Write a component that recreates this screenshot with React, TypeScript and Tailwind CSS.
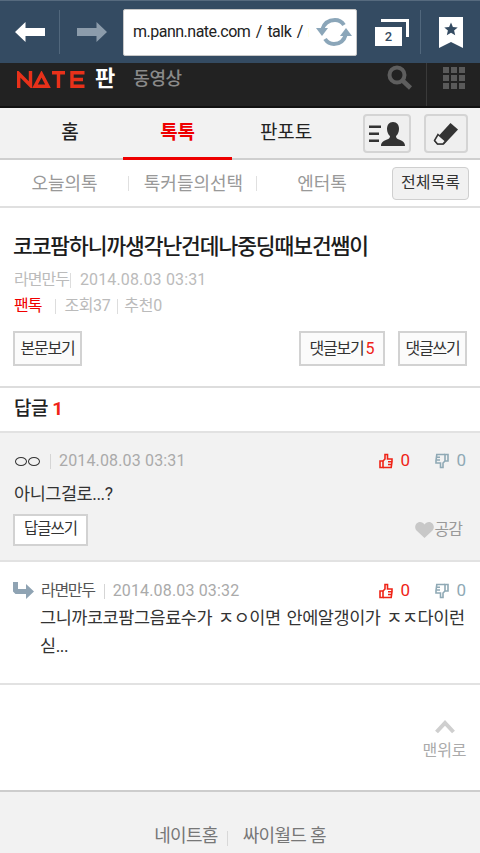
const FONT = "font-['Roboto','Noto_Sans_CJK_KR',sans-serif]";

function ThumbUp({ c }: { c: string }) {
  return (
    <svg width="14" height="16" viewBox="0 0 14 16" fill="none" stroke={c} strokeWidth="1.600">
      <path d="M1 8h3v6.500H1z" />
      <path d="M4 8l2-2V1.500h2.500V6H13v2.500l-.8 6H4" />
      <path d="M9 8.800h4M9 11.500h3.500" />
    </svg>
  );
}

function ThumbDown({ c }: { c: string }) {
  return (
    <svg width="14" height="16" viewBox="0 0 14 16" fill="none" stroke={c} strokeWidth="1.600">
      <path d="M10 1.500h3v6.500h-3z" />
      <path d="M10 8l-2 2v4.500H5.500V10H1V7.500l.8-6H10" />
      <path d="M5 4.200H1M5 7H1.300" />
    </svg>
  );
}

function Votes() {
  return (
    <div className="flex items-center">
      <div className="flex w-[56px] items-center gap-[7px] text-[17px] text-[#ef2317]">
        <ThumbUp c="#ef2317" />
        <span>0</span>
      </div>
      <div className="flex items-center gap-[7px] text-[17px] text-[#8fa9b5]">
        <ThumbDown c="#8fa9b5" />
        <span>0</span>
      </div>
    </div>
  );
}

function SmallBtn({ children, className = "" }: { children: React.ReactNode; className?: string }) {
  return (
    <div className={`flex items-center justify-center border-2 border-[#d2d2d2] text-[#333] ${className}`}>
      {children}
    </div>
  );
}

function BrowserBar() {
  return (
    <div className="flex h-[63px] items-center border-t border-t-[#566a7e] bg-[#344b62]">
      <div className="flex w-[59px] justify-center">
        <svg width="30" height="20" viewBox="0 0 30 20"><path d="M0 10 10.500 0v6H30v8H10.500v6z" fill="#fff" /></svg>
      </div>
      <div className="h-[44px] w-px bg-[#51677c]" />
      <div className="flex w-[63px] justify-center">
        <svg width="30" height="20" viewBox="0 0 30 20"><path d="M30 10 19.500 0v6H0v8h19.500v6z" fill="#8c9cab" /></svg>
      </div>
      <div className="flex h-[47px] w-[234px] items-center rounded-[2px] border border-[#c8c8c8] bg-white pl-[9px]">
        <span className="w-[176px] shrink-0 overflow-hidden whitespace-nowrap text-[16px] tracking-[-0.5px] text-[#222] [word-spacing:2px]">m.pann.nate.com / talk / m</span>
        <svg width="36" height="30" viewBox="0 0 36 30" className="ml-[7px] shrink-0" fill="none">
          <path d="M6 13C8 6 13 3 19 3c4 0 7 2 9 5" stroke="#8ba6b9" strokeWidth="4" />
          <path d="M30 17c-2 7-7 10-12 10-4 0-7-2-9-5" stroke="#8ba6b9" strokeWidth="4" />
          <path d="M0 11h12l-6 8zM24 19h12l-6-8z" fill="#8ba6b9" />
        </svg>
      </div>
      <div className="flex w-[63px] justify-center pl-[7px]">
        <div className="relative h-[27px] w-[34px]">
          <div className="absolute right-0 top-0 h-[18px] w-[28px] border-r-[3px] border-t-[3px] border-white" />
          <div className="absolute bottom-0 left-0 flex h-[19px] w-[27px] items-center justify-center bg-white text-[13px] font-medium leading-none text-[#344b62]">2</div>
        </div>
      </div>
      <div className="h-[44px] w-px bg-[#51677c]" />
      <div className="flex flex-1 justify-center">
        <svg width="24" height="31" viewBox="0 0 24 31">
          <path d="M0 0h24v31l-12-6-12 6z" fill="#fff" />
          <path d="M12 5.500l1.900 4.500 4.800.4-3.600 3.100 1.100 4.700-4.200-2.500-4.200 2.500 1.100-4.700-3.600-3.100 4.800-.4z" fill="#344b62" />
        </svg>
      </div>
    </div>
  );
}

function NateHeader() {
  return (
    <div className="flex h-[45px] items-start border-b-2 border-b-[#111] bg-[#222]">
      <div className="flex h-[24px] items-center pl-[17px] pt-[8px]">
        <svg width="68" height="17" viewBox="0 0 68 17" fill="none" stroke="#e8311a" strokeWidth="3.400">
          <path d="M1.700 17V2.500L13.500 14.500V0" />
          <path d="M18 15.300h13L24.500 3z" />
          <path d="M35 1.700h13M41.500 1.700V17" />
          <path d="M67.500 1.700H55v13.600h12.500M55 8.500h11" />
        </svg>
        <span className="ml-[10px] text-[22px] font-bold leading-none text-white">판</span>
        <span className="ml-[18px] text-[18px] font-medium leading-none tracking-[-0.4px] text-[#8a8a8a]">동영상</span>
      </div>
      <div className="ml-auto flex h-[43px]">
        <svg width="26" height="26" viewBox="0 0 26 26" fill="none" className="mt-[2px]">
          <circle cx="10" cy="10" r="7.500" stroke="#5e5e5e" strokeWidth="4" />
          <path d="M15.500 15.500 23.500 23" stroke="#5e5e5e" strokeWidth="4.500" />
        </svg>
        <div className="ml-[13px] h-[43px] w-px bg-[#3a3a3a]" />
        <div className="ml-[16px] mr-[15px] mt-[4px] grid h-[22px] w-[22px] grid-cols-3 gap-[2px]">
          {Array.from({ length: 9 }).map((_, i) => (
            <div key={i} className="bg-[#5a5a5a]" />
          ))}
        </div>
      </div>
    </div>
  );
}

function MainNav() {
  return (
    <div className="flex h-[52px] items-stretch border-b-2 border-b-[#cfcfcf] bg-[#f2f2f2]">
      <div className="flex w-[123px] items-center justify-center pl-[17px] text-[19px] font-medium text-[#222]">홈</div>
      <div className="relative flex w-[109px] items-center justify-center text-[19px] font-bold tracking-[-0.2px] text-[#ee0000]">
        톡톡
        <div className="absolute bottom-[-2px] left-0 right-0 h-[3px] bg-[#ee0000]" />
      </div>
      <div className="flex w-[108px] items-center justify-center text-[19px] tracking-[-0.1px] text-[#222]">판포토</div>
      <div className="ml-[23px] mt-[6px] flex h-[39px] w-[48px] items-center justify-center rounded-[4px] border-2 border-[#d4d4d4] bg-[#efefef]">
        <svg width="36" height="24" viewBox="0 0 36 24" fill="#333">
          <path d="M0 3.500h12V6H0zM0 10.500h10V13H0zM0 17.500h10V20H0z" />
          <path d="M24 0c4 0 6 3 6 7 0 3-1.500 6-3 7 0 2 1 3 3 3.500 3 1 6 2.500 6 6.500H12c0-4 3-5.500 6-6.500 2-.5 3-1.500 3-3.500-1.500-1-3-4-3-7 0-4 2-7 6-7z" />
        </svg>
      </div>
      <div className="ml-[13px] mt-[6px] flex h-[39px] w-[44px] items-center justify-center rounded-[4px] border-2 border-[#d4d4d4] bg-[#efefef]">
        <svg width="26" height="24" viewBox="0 0 26 24">
          <path d="M17.500 1 25 7.500 11 22.500H4L1 19z" fill="#333" />
          <path d="M5 12.500 12.500 19 10 22H4.500L1.500 18.500z" fill="#f2f2f2" stroke="#333" strokeWidth="1.500" />
        </svg>
      </div>
    </div>
  );
}

function SubNav() {
  return (
    <div className="flex h-[48px] items-center border-b-2 border-b-[#e0e0e0] bg-white text-[18px] text-[#999]">
      <div className="flex w-[128px] justify-center pl-[1px]">오늘의톡</div>
      <div className="h-[15px] w-px bg-[#e0e0e0]" />
      <div className="flex w-[127px] justify-center pl-[2px]">톡커들의선택</div>
      <div className="h-[15px] w-px bg-[#e0e0e0]" />
      <div className="flex w-[135px] justify-center pr-[5px]">엔터톡</div>
      <div className="flex h-[33px] w-[77px] items-center justify-center rounded-[4px] border border-[#cfcfcf] bg-[#f1f1f1] text-[16px] text-[#333]">전체목록</div>
    </div>
  );
}

function Article() {
  return (
    <div className="h-[180px] border-b-2 border-b-[#dddddd] bg-white pl-[13px] pr-[13px] pt-[24px]">
      <div className="h-[29px] whitespace-nowrap text-[21.500px] font-medium leading-[29px] tracking-[-1.100px] text-[#1c1c1c]">코코팜하니까생각난건데나중딩때보건쌤이</div>
      <div className="mt-[9px] flex h-[20px] items-center pl-px text-[16px] text-[#bbb]">
        <span className="tracking-[-1px]">라면만두</span>
        <span className="ml-px h-[15px] w-px bg-[#ddd]" />
        <span className="ml-[9px] tracking-[0.15px]">2014.08.03 03:31</span>
      </div>
      <div className="mt-[6px] flex h-[20px] items-center pl-px text-[16px] text-[#bbb]">
        <span className="tracking-[-1px] text-[#f00000]">팬톡</span>
        <span className="ml-[14px] h-[15px] w-px bg-[#ddd]" />
        <span className="ml-[8px] tracking-[-0.4px]">조회37</span>
        <span className="ml-[7px] h-[15px] w-px bg-[#ddd]" />
        <span className="ml-[6px] tracking-[-0.2px]">추천0</span>
      </div>
      <div className="mt-[15px] flex">
        <SmallBtn className="h-[35px] w-[69px] bg-[#fbfbfb] text-[16px] tracking-[-1.2px]">본문보기</SmallBtn>
        <SmallBtn className="ml-auto h-[35px] w-[86px] bg-[#fbfbfb] text-[16px] tracking-[-1.2px]">
          댓글보기<span className="ml-[2px] tracking-normal text-[#ef2317]">5</span>
        </SmallBtn>
        <SmallBtn className="ml-[13px] h-[35px] w-[69px] bg-[#fbfbfb] text-[16px] tracking-[-1.2px]">댓글쓰기</SmallBtn>
      </div>
    </div>
  );
}

function Comment1() {
  return (
    <div className="h-[129px] border-b-2 border-b-[#e2e2e2] bg-[#f2f2f2] pl-[13px] pr-[14px] pt-[16px]">
      <div className="flex h-[24px] items-center pl-[2px]">
        <span className="flex gap-[1px]">
          <span className="h-[9px] w-[12px] rounded-[50%] border-[1.500px] border-[#333]" />
          <span className="h-[9px] w-[12px] rounded-[50%] border-[1.500px] border-[#333]" />
        </span>
        <span className="ml-[10px] h-[15px] w-px bg-[#d5d5d5]" />
        <span className="ml-[8px] text-[16px] tracking-[0.15px] text-[#aaa]">2014.08.03 03:31</span>
        <div className="ml-auto"><Votes /></div>
      </div>
      <div className="mt-[9px] h-[24px] pl-px text-[17.500px] leading-[24px] tracking-[-0.450px] text-[#333]">아니그걸로...?</div>
      <div className="mt-[8px] flex items-center">
        <SmallBtn className="h-[32px] w-[75px] bg-white text-[15.500px] tracking-[-1px]">답글쓰기</SmallBtn>
        <div className="ml-auto mr-[4px] flex items-center gap-[1px] text-[16px] tracking-[-1px] text-[#999]">
          <svg width="19" height="16" viewBox="0 0 19 16" fill="#c8c8c8"><path d="M9.500 16 1.500 8.500C-1.500 5 1 0 5 0c2 0 3.500 1 4.500 2.500C10.500 1 12 0 14 0c4 0 6.500 5 3.500 8.500z" /></svg>
          <span>공감</span>
        </div>
      </div>
    </div>
  );
}

function Comment2() {
  return (
    <div className="h-[123px] border-b-2 border-b-[#e2e2e2] bg-white pl-[13px] pr-[13px] pt-[16px]">
      <div className="flex h-[26px] items-center">
        <svg width="21" height="19" viewBox="0 0 21 19" fill="#8fa3b3"><path d="M0 0h5v7h8V2l8 7.500L13 17v-5H2.500L0 9.500z" /></svg>
        <span className="ml-[7px] text-[16px] tracking-[-1.300px] text-[#555]">라면만두</span>
        <span className="ml-[9px] h-[15px] w-px bg-[#d5d5d5]" />
        <span className="ml-[8px] text-[16px] tracking-[0.15px] text-[#aaa]">2014.08.03 03:32</span>
        <div className="ml-auto mr-px"><Votes /></div>
      </div>
      <div className="ml-[27px] text-[17.500px] leading-[28px] tracking-[-0.450px] text-[#333] [word-spacing:2px]">그니까코코팜그음료수가 ㅈㅇ이면 안에알갱이가 ㅈㅈ다이런싣...</div>
    </div>
  );
}

export default function App() {
  return (
    <div className={`h-[853px] w-[480px] overflow-hidden bg-white ${FONT}`}>
      <BrowserBar />
      <NateHeader />
      <MainNav />
      <SubNav />
      <Article />
      <div className="flex h-[45px] items-center border-b-2 border-b-[#e2e2e2] bg-white pl-[14px] text-[19px] font-medium tracking-[-0.4px] text-[#222]">
        답글<span className="ml-[4px] font-bold text-[#ef2317]">1</span>
      </div>
      <Comment1 />
      <Comment2 />
      <div className="flex h-[107px] flex-col items-end border-b-2 border-b-[#cdcdcd] bg-white pr-[13px] pt-[35px]">
        <div className="flex w-[45px] flex-col items-center text-[16px] text-[#aaa]">
          <svg width="20" height="14" viewBox="0 0 20 14" fill="none"><path d="M1.500 12 10 3l8.500 9" stroke="#cfcfcf" strokeWidth="4" /></svg>
          <span className="mt-[6px] whitespace-nowrap leading-[22px]">맨위로</span>
        </div>
      </div>
      <div className="flex h-[61px] items-start justify-center bg-[#f2f2f2] pt-[32px] text-[18px] tracking-[-0.7px] text-[#777]">
        <span className="leading-[24px]">네이트홈</span>
        <span className="ml-[9px] mt-[7px] h-[15px] w-px bg-[#d8d8d8]" />
        <span className="ml-[15px] leading-[24px]">싸이월드 홈</span>
      </div>
    </div>
  );
}
